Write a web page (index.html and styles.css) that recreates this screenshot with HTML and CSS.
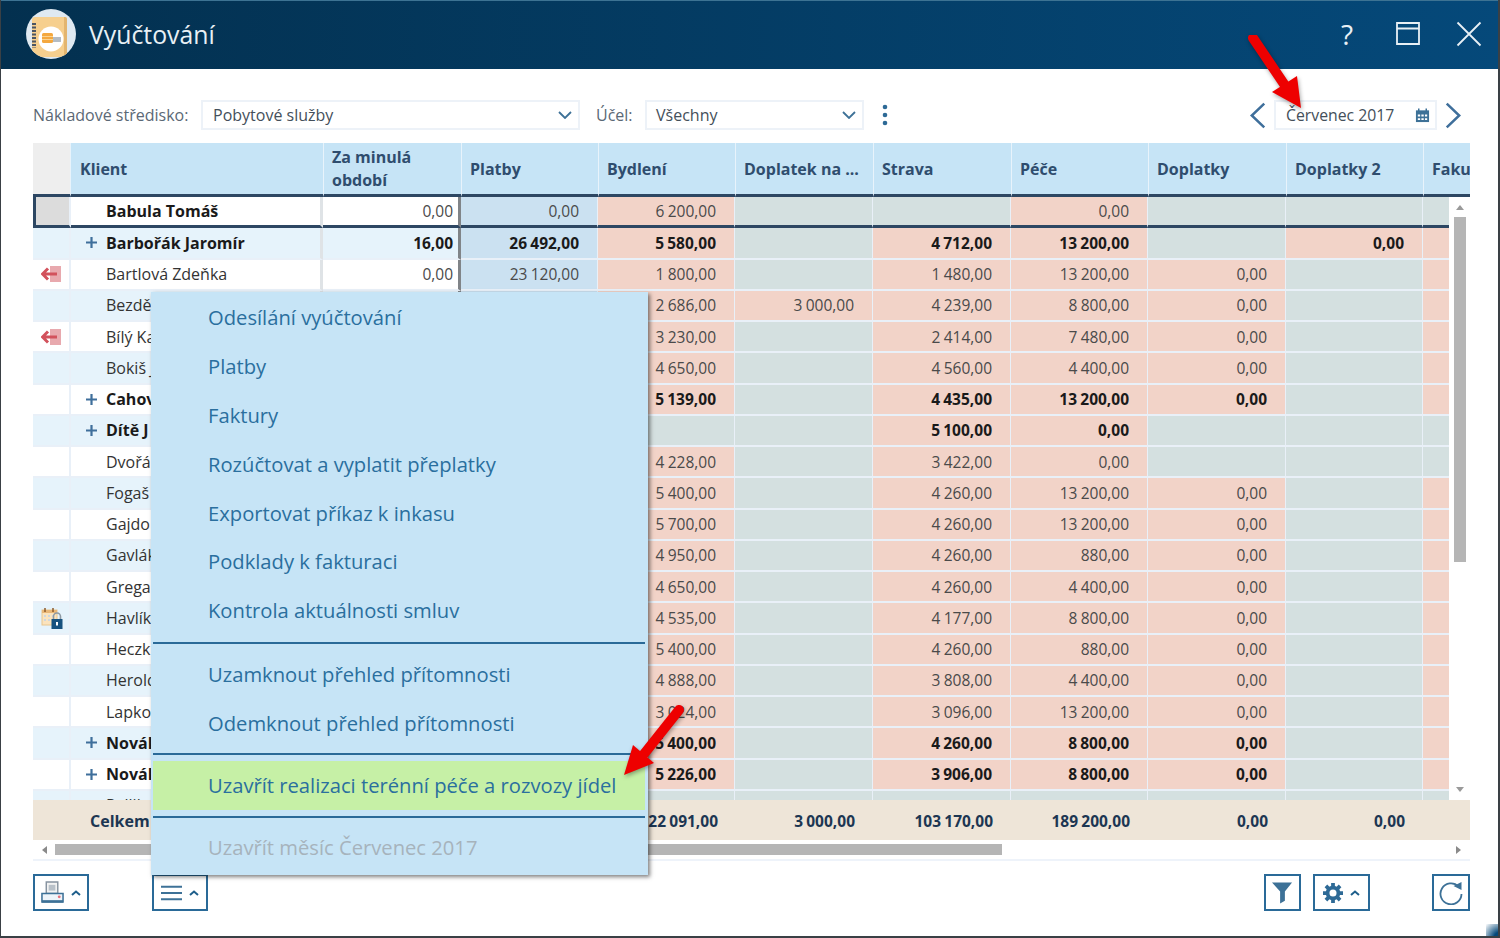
FILE: index.html
```html
<!DOCTYPE html>
<html lang="cs">
<head>
<meta charset="utf-8">
<title>Vyúčtování</title>
<link rel="stylesheet" href="styles.css">
</head>
<body>
<div class="window">
  <header class="titlebar">
    <svg class="logo" viewBox="0 0 50 50"><defs><clipPath id="lc"><circle cx="25" cy="25" r="25"/></clipPath></defs><circle cx="25" cy="25" r="25" fill="#dfe9f1"/><g clip-path="url(#lc)"><path d="M6 11a3 3 0 0 1 3-3h29a3 3 0 0 1 3 3v37H6z" fill="#f6cf8e"/><path d="M38 8h1a2 2 0 0 1 2 2v38h-3z" fill="#e3b56f"/></g><path d="M8 14v25" stroke="#4b5563" stroke-width="4" stroke-dasharray="2 1.500"/><circle cx="25" cy="30" r="12.500" fill="#fff"/><rect x="16" y="24" width="11" height="10" rx="1.500" fill="#f4a83f"/><path d="M16 27.500h11M16 30.500h11" stroke="#fbd38f"/><rect x="27" y="28" width="8" height="5" fill="#b4bcc4"/></svg>
    <h1 class="title">Vyúčtování</h1>
    <div class="winctl">
      <span class="help">?</span>
      <svg class="ctl-max" viewBox="0 0 24 24"><path d="M1 1h22v21H1zM1 6.500h22" fill="none" stroke="#e8f0f5" stroke-width="1.800"/></svg>
      <svg class="ctl-close" viewBox="0 0 26 26"><path d="M1.500 1.500l23 23M24.500 1.500l-23 23" fill="none" stroke="#e8f0f5" stroke-width="1.800"/></svg>
    </div>
  </header>

  <main class="content">
    <div class="filters">
      <label class="flabel">Nákladové středisko:</label>
      <div class="select s-center"><span>Pobytové služby</span><svg class="chev" viewBox="0 0 14 8"><path d="M1 1l6 6 6-6" fill="none" stroke="#3d7197" stroke-width="1.800"/></svg></div>
      <label class="flabel l-purpose">Účel:</label>
      <div class="select s-purpose"><span>Všechny</span><svg class="chev" viewBox="0 0 14 8"><path d="M1 1l6 6 6-6" fill="none" stroke="#3d7197" stroke-width="1.800"/></svg></div>
      <svg class="dots" viewBox="0 0 6 22"><circle cx="3" cy="3" r="2.300"/><circle cx="3" cy="11" r="2.300"/><circle cx="3" cy="19" r="2.300"/></svg>
      <div class="month-nav">
        <svg class="nav-arrow" viewBox="0 0 16 26"><path d="M14.500 1.500L2.500 13l12 11.500" fill="none" stroke="#3f6f9b" stroke-width="2.400"/></svg>
        <div class="month"><span>Červenec 2017</span>
          <svg class="cal" viewBox="0 0 16 16"><path d="M1 2.500h14v12.500H1z" fill="#3d7197"/><path d="M4 .5v3M12 .5v3" stroke="#3d7197" stroke-width="1.600"/><path d="M3 7h2.500v2H3zM6.800 7h2.500v2H6.800zM10.600 7H13v2h-2.400zM3 10.800h2.500v2H3zM6.800 10.800h2.500v2H6.800zM10.600 10.800H13v2h-2.400z" fill="#fff"/></svg>
        </div>
        <svg class="nav-arrow" viewBox="0 0 16 26"><path d="M1.500 1.500L13.500 13l-12 11.500" fill="none" stroke="#3f6f9b" stroke-width="2.400"/></svg>
      </div>
    </div>

    <section class="grid">
      <div class="gr ghead">
        <div class="hg"></div><div class="hc">Klient</div><div class="hc two">Za minulá období</div><div class="hc">Platby</div><div class="hc">Bydlení</div><div class="hc">Doplatek na ...</div><div class="hc">Strava</div><div class="hc">Péče</div><div class="hc">Doplatky</div><div class="hc">Doplatky 2</div><div class="hc">Faku</div>
      </div>
      <div class="gbody">
        <div class="rows">
          <div class="gr row sel bold-name"><div class="gut"></div><div class="name"><i></i><span>Babula Tomáš</span></div><div class="c prev">0,00</div><div class="c pay">0,00</div><div class="c p">6 200,00</div><div class="c g"></div><div class="c g"></div><div class="c p">0,00</div><div class="c g"></div><div class="c g"></div><div class="c g"></div></div>
          <div class="gr row even bold"><div class="gut"></div><div class="name"><i><svg class="plus" viewBox="0 0 11 11"><path d="M5.500 0v11M0 5.500h11"/></svg></i><span>Barbořák Jaromír</span></div><div class="c prev">16,00</div><div class="c pay">26 492,00</div><div class="c p">5 580,00</div><div class="c g"></div><div class="c p">4 712,00</div><div class="c p">13 200,00</div><div class="c g"></div><div class="c p">0,00</div><div class="c p"></div></div>
          <div class="gr row"><div class="gut"><svg class="exit" viewBox="0 0 20 16"><path d="M9 0h11v16H9z" fill="#e8a9ae"/><path d="M1 8h15M7 2.500L1.500 8 7 13.500" fill="none" stroke="#d2525c" stroke-width="3"/></svg></div><div class="name"><i></i><span>Bartlová Zdeňka</span></div><div class="c prev">0,00</div><div class="c pay">23 120,00</div><div class="c p">1 800,00</div><div class="c g"></div><div class="c p">1 480,00</div><div class="c p">13 200,00</div><div class="c p">0,00</div><div class="c g"></div><div class="c p"></div></div>
          <div class="gr row even"><div class="gut"></div><div class="name"><i></i><span>Bezdě</span></div><div class="c prev"></div><div class="c pay"></div><div class="c p">2 686,00</div><div class="c p">3 000,00</div><div class="c p">4 239,00</div><div class="c p">8 800,00</div><div class="c p">0,00</div><div class="c g"></div><div class="c p"></div></div>
          <div class="gr row"><div class="gut"><svg class="exit" viewBox="0 0 20 16"><path d="M9 0h11v16H9z" fill="#e8a9ae"/><path d="M1 8h15M7 2.500L1.500 8 7 13.500" fill="none" stroke="#d2525c" stroke-width="3"/></svg></div><div class="name"><i></i><span>Bílý Ka</span></div><div class="c prev"></div><div class="c pay"></div><div class="c p">3 230,00</div><div class="c g"></div><div class="c p">2 414,00</div><div class="c p">7 480,00</div><div class="c p">0,00</div><div class="c g"></div><div class="c p"></div></div>
          <div class="gr row even"><div class="gut"></div><div class="name"><i></i><span>Bokiš J</span></div><div class="c prev"></div><div class="c pay"></div><div class="c p">4 650,00</div><div class="c g"></div><div class="c p">4 560,00</div><div class="c p">4 400,00</div><div class="c p">0,00</div><div class="c g"></div><div class="c p"></div></div>
          <div class="gr row bold"><div class="gut"></div><div class="name"><i><svg class="plus" viewBox="0 0 11 11"><path d="M5.500 0v11M0 5.500h11"/></svg></i><span>Cahov</span></div><div class="c prev"></div><div class="c pay"></div><div class="c p">5 139,00</div><div class="c g"></div><div class="c p">4 435,00</div><div class="c p">13 200,00</div><div class="c p">0,00</div><div class="c g"></div><div class="c p"></div></div>
          <div class="gr row even bold"><div class="gut"></div><div class="name"><i><svg class="plus" viewBox="0 0 11 11"><path d="M5.500 0v11M0 5.500h11"/></svg></i><span>Dítě J</span></div><div class="c prev"></div><div class="c pay"></div><div class="c g"></div><div class="c g"></div><div class="c p">5 100,00</div><div class="c p">0,00</div><div class="c g"></div><div class="c g"></div><div class="c g"></div></div>
          <div class="gr row"><div class="gut"></div><div class="name"><i></i><span>Dvořá</span></div><div class="c prev"></div><div class="c pay"></div><div class="c p">4 228,00</div><div class="c g"></div><div class="c p">3 422,00</div><div class="c p">0,00</div><div class="c g"></div><div class="c g"></div><div class="c g"></div></div>
          <div class="gr row even"><div class="gut"></div><div class="name"><i></i><span>Fogaš</span></div><div class="c prev"></div><div class="c pay"></div><div class="c p">5 400,00</div><div class="c g"></div><div class="c p">4 260,00</div><div class="c p">13 200,00</div><div class="c p">0,00</div><div class="c g"></div><div class="c p"></div></div>
          <div class="gr row"><div class="gut"></div><div class="name"><i></i><span>Gajdo</span></div><div class="c prev"></div><div class="c pay"></div><div class="c p">5 700,00</div><div class="c g"></div><div class="c p">4 260,00</div><div class="c p">13 200,00</div><div class="c p">0,00</div><div class="c g"></div><div class="c p"></div></div>
          <div class="gr row even"><div class="gut"></div><div class="name"><i></i><span>Gavlák</span></div><div class="c prev"></div><div class="c pay"></div><div class="c p">4 950,00</div><div class="c g"></div><div class="c p">4 260,00</div><div class="c p">880,00</div><div class="c p">0,00</div><div class="c g"></div><div class="c p"></div></div>
          <div class="gr row"><div class="gut"></div><div class="name"><i></i><span>Grega</span></div><div class="c prev"></div><div class="c pay"></div><div class="c p">4 650,00</div><div class="c g"></div><div class="c p">4 260,00</div><div class="c p">4 400,00</div><div class="c p">0,00</div><div class="c g"></div><div class="c p"></div></div>
          <div class="gr row even"><div class="gut"><svg class="callock" viewBox="0 0 22 22"><rect x="1" y="3" width="15" height="15" fill="#fbe3bd" stroke="#e8c68e"/><path d="M1 3h15v3H1z" fill="#e9b777"/><path d="M4 1v4M12 1v4" stroke="#8a5a2b" stroke-width="1.500"/><path d="M3 8h2v2H3zM7 8h2v2H7zM11 8h2v2h-2zM3 12h2v2H3zM7 12h2v2H7z" fill="#cfd6dc"/><path d="M12.500 12V9.500a3.500 3.500 0 0 1 7 0V12" fill="none" stroke="#8d99a3" stroke-width="1.600"/><rect x="10.500" y="12" width="11" height="10" fill="#17527f"/><path d="M16 15v3.500" stroke="#fff" stroke-width="2"/></svg></div><div class="name"><i></i><span>Havlík</span></div><div class="c prev"></div><div class="c pay"></div><div class="c p">4 535,00</div><div class="c g"></div><div class="c p">4 177,00</div><div class="c p">8 800,00</div><div class="c p">0,00</div><div class="c g"></div><div class="c p"></div></div>
          <div class="gr row"><div class="gut"></div><div class="name"><i></i><span>Heczk</span></div><div class="c prev"></div><div class="c pay"></div><div class="c p">5 400,00</div><div class="c g"></div><div class="c p">4 260,00</div><div class="c p">880,00</div><div class="c p">0,00</div><div class="c g"></div><div class="c p"></div></div>
          <div class="gr row even"><div class="gut"></div><div class="name"><i></i><span>Herold</span></div><div class="c prev"></div><div class="c pay"></div><div class="c p">4 888,00</div><div class="c g"></div><div class="c p">3 808,00</div><div class="c p">4 400,00</div><div class="c p">0,00</div><div class="c g"></div><div class="c p"></div></div>
          <div class="gr row"><div class="gut"></div><div class="name"><i></i><span>Lapko</span></div><div class="c prev"></div><div class="c pay"></div><div class="c p">3 024,00</div><div class="c g"></div><div class="c p">3 096,00</div><div class="c p">13 200,00</div><div class="c p">0,00</div><div class="c g"></div><div class="c p"></div></div>
          <div class="gr row even bold"><div class="gut"></div><div class="name"><i><svg class="plus" viewBox="0 0 11 11"><path d="M5.500 0v11M0 5.500h11"/></svg></i><span>Novák</span></div><div class="c prev"></div><div class="c pay"></div><div class="c p">5 400,00</div><div class="c g"></div><div class="c p">4 260,00</div><div class="c p">8 800,00</div><div class="c p">0,00</div><div class="c g"></div><div class="c p"></div></div>
          <div class="gr row bold"><div class="gut"></div><div class="name"><i><svg class="plus" viewBox="0 0 11 11"><path d="M5.500 0v11M0 5.500h11"/></svg></i><span>Novák</span></div><div class="c prev"></div><div class="c pay"></div><div class="c p">5 226,00</div><div class="c g"></div><div class="c p">3 906,00</div><div class="c p">8 800,00</div><div class="c p">0,00</div><div class="c g"></div><div class="c p"></div></div>
          <div class="gr row even"><div class="gut"></div><div class="name"><i></i><span>Pallik</span></div><div class="c prev"></div><div class="c pay"></div><div class="c g"></div><div class="c g"></div><div class="c g"></div><div class="c g"></div><div class="c g"></div><div class="c g"></div><div class="c g"></div></div>
        </div>
        <div class="vscroll"><svg class="tri" viewBox="0 0 8 5"><path d="M0 5l4-5 4 5z"/></svg><div class="vthumb"></div><div class="vtail"></div><svg class="tri" viewBox="0 0 8 5"><path d="M0 0l4 5 4-5z"/></svg></div>
      </div>
      <div class="gr total">
        <div class="tname">Celkem</div><div></div><div></div><div class="t t-first">22 091,00</div><div class="t">3 000,00</div><div class="t">103 170,00</div><div class="t">189 200,00</div><div class="t">0,00</div><div class="t">0,00</div><div></div>
      </div>
      <div class="hscroll"><svg class="tri-h" viewBox="0 0 5 8"><path d="M5 0L0 4l5 4z"/></svg><div class="hthumb"></div><div class="htail"></div><svg class="tri-h" viewBox="0 0 5 8"><path d="M0 0l5 4-5 4z"/></svg></div>
    </section>

    <footer class="toolbar">
      <button class="tb tb-wide"><svg class="ic-print" viewBox="0 0 24 24"><path d="M5.500 1h12v12h-12z" fill="#f2f2f2" stroke="#8793a0" stroke-width="1.500"/><path d="M8 4h7v6H8z" fill="#b9c1c9"/><path d="M1 13h22v9H1z" fill="#eef4f9" stroke="#3d7197" stroke-width="1.600"/><path d="M1 20h22v2.500H1z" fill="#3d7197"/><circle cx="19" cy="16.500" r="1.500" fill="#e8707a"/></svg><svg class="caret" viewBox="0 0 10 6"><path d="M1 5l4-3.500L9 5" fill="none" stroke="#1f5f8b" stroke-width="2"/></svg></button>
      <button class="tb tb-wide tb-menu"><svg class="ic-menu" viewBox="0 0 22 16"><path d="M0 1.500h22M0 8h22M0 14.500h22" stroke="#3d7197" stroke-width="2.200"/></svg><svg class="caret" viewBox="0 0 10 6"><path d="M1 5l4-3.500L9 5" fill="none" stroke="#1f5f8b" stroke-width="2"/></svg></button>
      <div class="tb-spacer"></div>
      <button class="tb"><svg class="ic-filter" viewBox="0 0 22 22"><path d="M0 0h21l-7.500 9.500V19l-5 3V9.500z" fill="#3d7197"/></svg></button>
      <button class="tb tb-gear"><svg class="ic-gear" viewBox="0 0 24 24"><circle cx="12" cy="12" r="6.500" fill="none" stroke="#2e6a96" stroke-width="4.500"/><path d="M12 0v5M12 19v5M0 12h5M19 12h5M3.500 3.500l3.500 3.500M17 17l3.500 3.500M20.500 3.500L17 7M7 17l-3.500 3.500" stroke="#2e6a96" stroke-width="4.500"/></svg><svg class="caret" viewBox="0 0 10 6"><path d="M1 5l4-3.500L9 5" fill="none" stroke="#1f5f8b" stroke-width="2"/></svg></button>
      <button class="tb tb-refresh"><svg class="ic-refresh" viewBox="0 0 24 24"><path d="M19.500 5.500A10.500 10.500 0 1 0 22.500 13" fill="none" stroke="#3d7197" stroke-width="1.800"/><path d="M14.500 5l8-4v8z" fill="#3d7197"/></svg></button>
    </footer>
  </main>

  <nav class="menu">
    <a class="mi">Odesílání vyúčtování</a>
    <a class="mi">Platby</a>
    <a class="mi">Faktury</a>
    <a class="mi">Rozúčtovat a vyplatit přeplatky</a>
    <a class="mi">Exportovat příkaz k inkasu</a>
    <a class="mi">Podklady k fakturaci</a>
    <a class="mi">Kontrola aktuálnosti smluv</a>
    <hr class="msep msep-first">
    <a class="mi">Uzamknout přehled přítomnosti</a>
    <a class="mi">Odemknout přehled přítomnosti</a>
    <hr class="msep">
    <a class="mi mi-green">Uzavřít realizaci terénní péče a rozvozy jídel</a>
    <hr class="msep msep-low">
    <a class="mi mi-off">Uzavřít měsíc Červenec 2017</a>
  </nav>

  <svg class="arrow arrow-top" viewBox="0 0 60 80"><path d="M7 3L38 49" stroke="#ee0000" stroke-width="10" stroke-linecap="round"/><path d="M26 57L51 41l4 32z" fill="#ee0000"/></svg>
  <svg class="arrow arrow-low" viewBox="0 0 70 76"><path d="M61 5L26 49" stroke="#ee0000" stroke-width="10" stroke-linecap="round"/><path d="M15 40L36 58 6 70z" fill="#ee0000"/></svg>
  <div class="corner"></div>
</div>
</body>
</html>
```
FILE: styles.css
```css
* { box-sizing: border-box; }
html, body { margin: 0; padding: 0; background: #fff; }
body { font-family: "Open Sans", "Noto Sans", sans-serif; font-size: 16px; color: #333; }

.window { position: relative; width: 1500px; height: 938px; overflow: hidden; border: solid #3a4045; border-width: 0 2px 2px 1px; background: #fff; display: flex; flex-direction: column; }

.titlebar { flex: none; height: 69px; margin: 0 -2px 0 -1px; display: flex; align-items: center; padding: 0 18px 3px 26px; background: linear-gradient(90deg, #03304f, #05497a); border-top: 1px solid #3d7393; }
.logo { width: 50px; height: 50px; flex: none; }
.title { margin: 0 0 0 13px; font-size: 24.8px; font-weight: 400; color: #e8f0f5; }
.winctl { margin-left: auto; display: flex; align-items: center; }
.help { font-size: 28px; color: #e8f0f5; line-height: 1; width: 18px; text-align: center; margin-right: 40px; }
.ctl-max { width: 24px; height: 24px; margin-right: 36px; }
.ctl-close { width: 26px; height: 26px; }

.content { flex: 1; display: flex; flex-direction: column; padding: 31px 28px 0 32px; }

.filters { height: 30px; display: flex; align-items: center; flex: none; }
.flabel { color: #5b6875; width: 168px; flex: none; }
.l-purpose { width: 49px; margin-left: 16px; }
.select { height: 30px; border: 2px solid #edf2f8; display: flex; align-items: center; justify-content: space-between; padding: 0 6px 0 9px; flex: none; color: #444f5a; }
.s-center { width: 379px; padding-left: 10px; }
.s-purpose { width: 219px; }
.chev { width: 14px; height: 8px; }
.dots { width: 6px; height: 22px; fill: #2e6a96; margin-left: 18px; flex: none; }
.month-nav { margin-left: auto; display: flex; align-items: center; margin-right: 8px; }
.nav-arrow { width: 17px; height: 27px; }
.month { width: 163px; height: 30px; margin: 0 8px 0 8px; border: 2px solid #edf2f8; display: flex; align-items: center; justify-content: space-between; padding: 0 5px 0 10px; color: #444f5a; font-size: 15.8px; }
.cal { width: 15px; height: 15px; }

.grid { margin-top: 13px; flex: none; width: 1437px; border: solid #eef3fa; border-width: 0 0 2px; overflow: hidden; }
.gr { display: grid; grid-template-columns: 38px 252px 138px 137px 137px 138px 138px 137px 138px 137px 47px; }

.ghead { height: 54px; background: #c6e4f6; }
.hg { background: #eeeeee; }
.hc { display: flex; align-items: center; padding: 1px 10px 0 8px; font-weight: 700; line-height: 23px; color: #2f4d6e; border-left: 1px solid #e8f3fb; border-bottom: 3px solid #2d4763; white-space: nowrap; overflow: hidden; }
.hc:nth-child(2) { border-left: 0; padding-left: 9px; }
.two { white-space: normal; padding-top: 0; }
.hg { border-bottom: 3px solid #2d4763; border-right: 1px solid #e8f3fb; }

.gbody { display: flex; height: 603px; overflow: hidden; }
.rows { width: 1416px; flex: none; }
.row { height: 31.25px; width: 1437px; background: #fff; }
.row.even { background: #e6f3fb; }
.row > div { border-bottom: 2px solid #e9f0f8; }
.row.sel > div { border-bottom: 3px solid #2d4763; }
.gut { border-right: 2px solid #e9f0f8; display: flex; align-items: center; padding-left: 8px; }
.row.sel .gut { background: #dcdcdc; border-left: 3px solid #2d4763; }
.name { display: flex; align-items: center; padding-left: 6px; color: #333; white-space: nowrap; overflow: hidden; border-right: 3px solid #dfe3e6; }
.name i { width: 29px; flex: none; display: flex; font-style: normal; padding-left: 9px; }
.bold .name, .sel .name { font-weight: 700; color: #1a1a1a; }
.c { display: flex; align-items: center; justify-content: flex-end; padding-right: 18px; border-right: 1px solid #e9f0f8; color: #4a4a4a; font-size: 15.5px; word-spacing: -.8px; }
.bold .c { font-weight: 700; color: #1a1a1a; }
.prev { padding-right: 5px; border-right: 3px solid #808488; }
.pay { background: #cbe1f1; }
.p { background: #f2d3c8; }
.g { background: #d4e0e0; }
.plus { width: 11px; height: 11px; stroke: #3f6f9b; stroke-width: 2.200; }
.exit { width: 20px; height: 16px; }
.callock { width: 22px; height: 22px; }

.vscroll { width: 21px; height: 603px; flex: none; background: #fff; display: flex; flex-direction: column; align-items: center; padding: 8px 0 8px; }
.tri { width: 8px; height: 5px; fill: #9a9a9a; flex: none; }
.vthumb { width: 12px; height: 345px; margin-top: 7px; background: #b5b5b5; flex: none; }
.vtail { flex: 1; }

.total { height: 40px; padding-top: 1px; background: #eee5d8; align-items: center; font-weight: 700; color: #1c3652; font-size: 15.5px; word-spacing: -.8px; }
.tname { grid-column: 1 / 3; padding-left: 57px; font-size: 16px; }
.t { text-align: right; padding-right: 18px; }
.t-first { padding-right: 17px; }

.hscroll { height: 19px; display: flex; align-items: center; padding: 0 9px 0 9px; background: #fff; }
.tri-h { width: 5px; height: 8px; fill: #8a8a8a; flex: none; }
.hthumb { width: 947px; height: 11px; margin-left: 8px; background: #b5b5b5; flex: none; }
.htail { flex: 1; }

.toolbar { display: flex; gap: 12px; margin-top: 13px; width: 1437px; flex: none; }
.tb { width: 37px; height: 37px; padding: 0; background: #fff; border: 2px solid #2a6a98; display: flex; align-items: center; justify-content: center; gap: 7px; flex: none; }
.tb-wide { width: 56px; }
.tb-menu { margin-left: 51px; }
.tb-spacer { flex: 1; }
.tb-gear { width: 57px; }
.tb-refresh { margin-left: 50px; width: 38px; }
.caret { width: 10px; height: 6px; }
.ic-print { width: 23px; height: 23px; }
.ic-menu { width: 21px; height: 16px; }
.ic-filter { width: 21px; height: 22px; }
.ic-gear { width: 20px; height: 20px; }
.ic-refresh { width: 24px; height: 24px; }

.menu { position: absolute; left: 150px; top: 292px; width: 497px; height: 583px; padding: 1px 3px 0 2px; background: #c6e4f6; box-shadow: 2px 2px 4px rgba(0, 0, 0, .5); display: flex; flex-direction: column; }
.mi { height: 48.8px; flex: none; display: flex; align-items: center; padding-left: 55px; font-size: 20.2px; color: #2a6f9e; white-space: nowrap; }
.mi-green { background: #c6f0a6; padding-bottom: 2px; }
.mi-off { color: #a6b3bc; }
.msep { height: 2px; margin: 6px 0; border: 0; background: #2a6a98; flex: none; }
.msep-first { margin-top: 7px; }
.msep-low { margin-bottom: 5px; }

.arrow { position: absolute; filter: drop-shadow(1px 2px 2px rgba(0, 0, 0, .35)); }
.arrow-top { left: 1245px; top: 35px; width: 60px; height: 80px; }
.arrow-low { left: 617px; top: 705px; width: 70px; height: 76px; }
.corner { position: absolute; right: -2px; bottom: -2px; width: 14px; height: 14px; background: radial-gradient(circle at 100% 100%, #05497a 30%, rgba(5, 73, 122, 0) 100%); }
```
